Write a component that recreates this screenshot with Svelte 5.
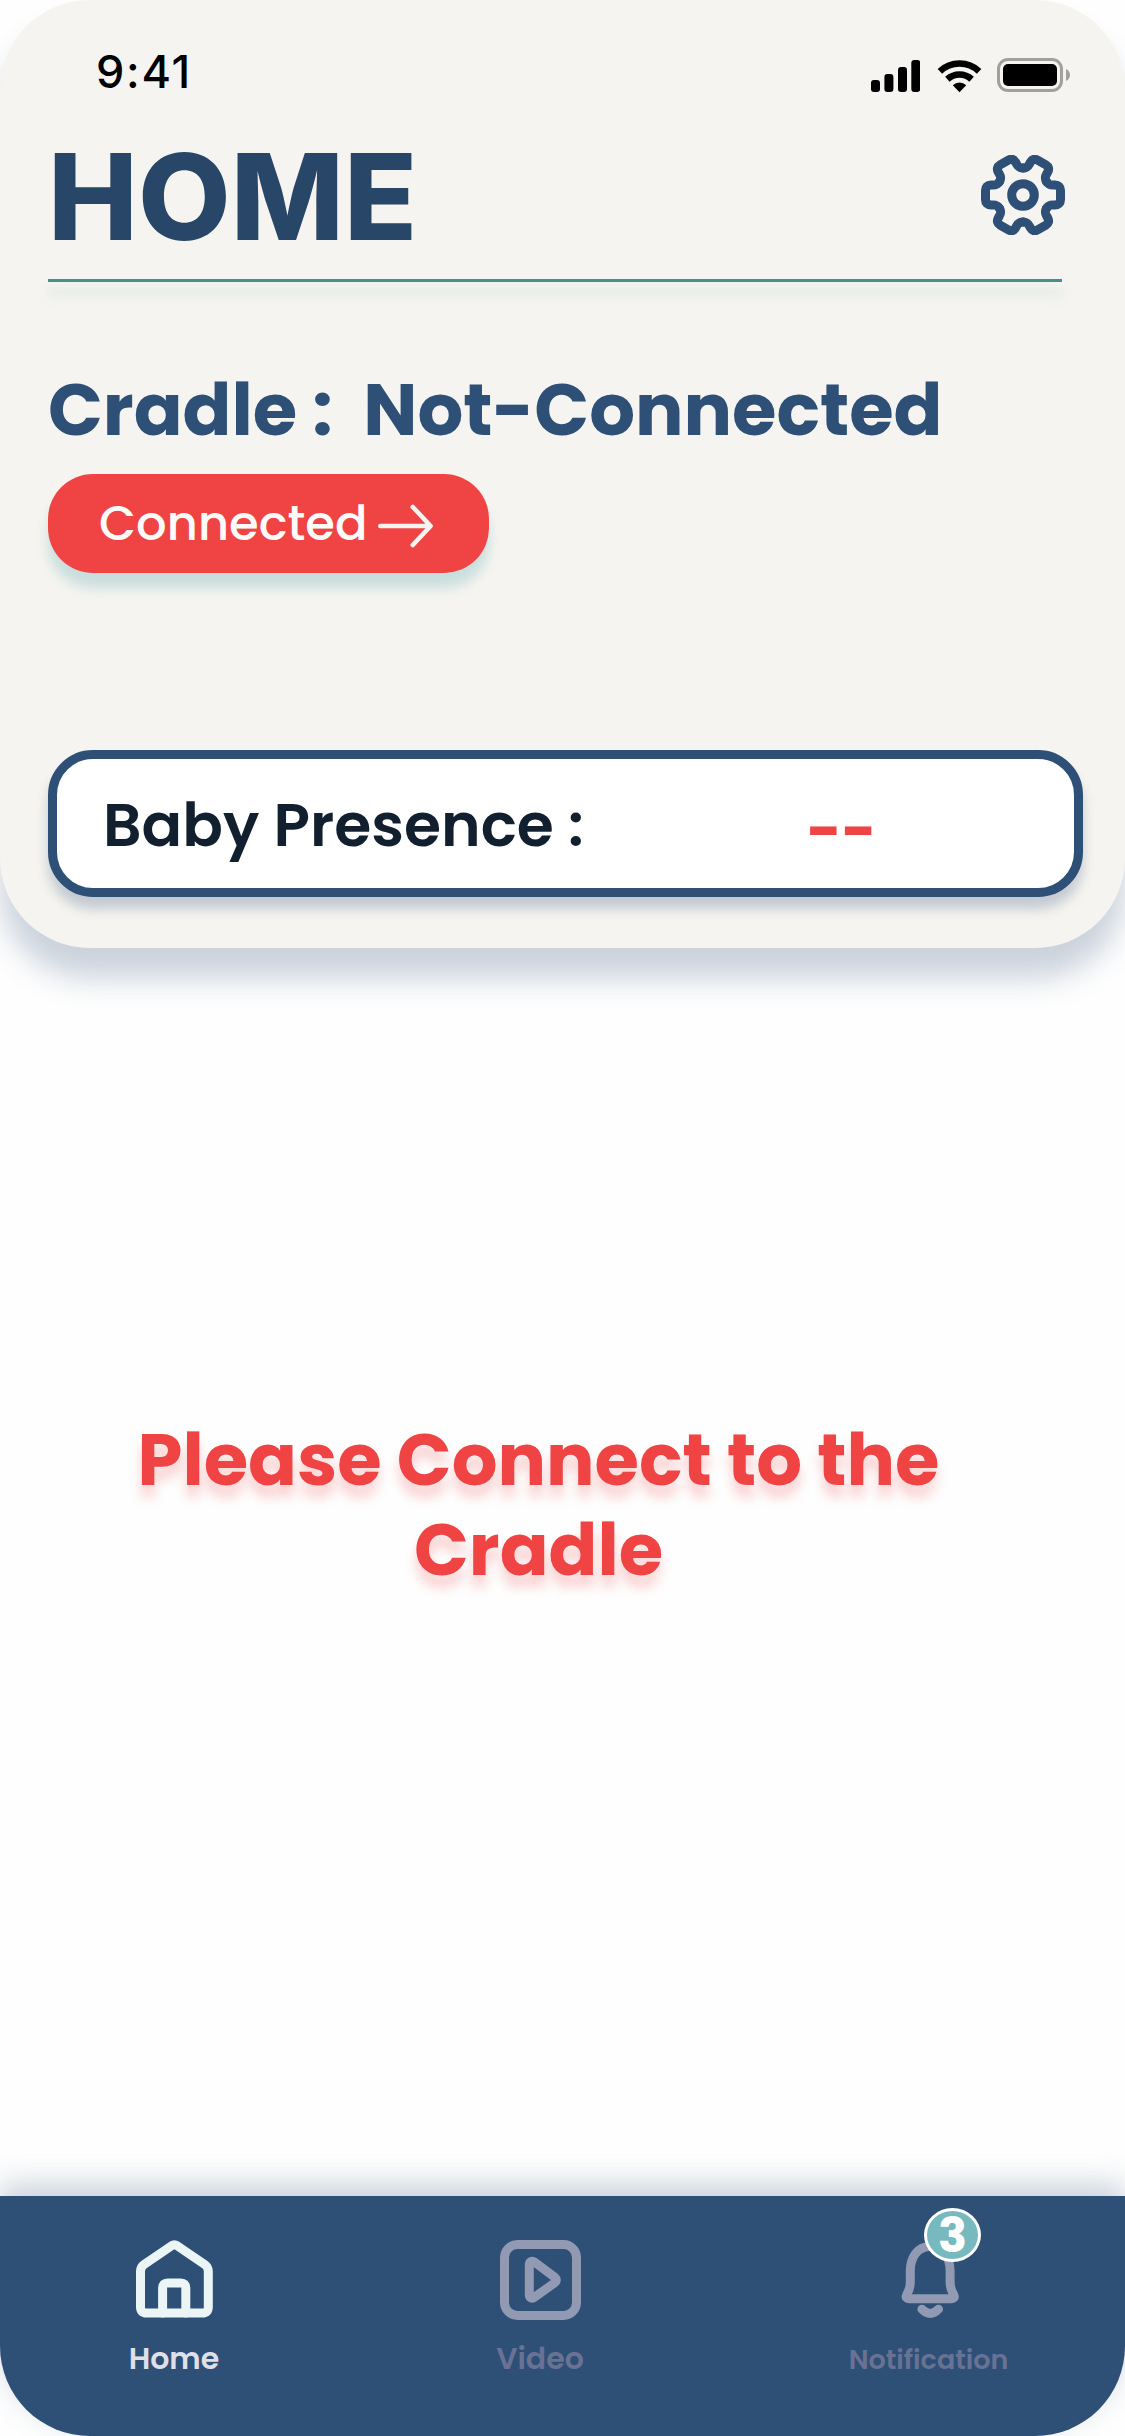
<script>
  let unread = $state(3);
  let active = $state('Home');

  // One gear tooth, pointing right; six rotated copies form the outline.
  const tooth = 'M23.4 -13.5C25.9 -9.2 28.5 -10 32 -10C35.6 -10 37.5 -8 37.5 -4.8V4.8C37.5 8 35.6 10 32 10C28.5 10 25.9 9.2 23.4 13.5';
  const angles = [0, 60, 120, 180, 240, 300];
</script>

<div class="screen">
  <section class="panel">
    <div class="status">
      <span class="time">9:41</span>
      <div class="indicators">
        <svg class="signal" viewBox="0 0 49 32" width="49" height="32">
          <rect x="0" y="20" width="9" height="12" rx="3" />
          <rect x="13.4" y="14" width="9" height="18" rx="3" />
          <rect x="27" y="7" width="9" height="25" rx="3" />
          <rect x="40.3" y="0" width="9" height="32" rx="3" />
        </svg>
        <svg class="wifi" viewBox="0 0 45 34" width="45" height="34">
          <path d="M2.9 12.3A28.6 28.6 0 0 1 42.1 12.3" fill="none" stroke="#000" stroke-width="6.6" />
          <path d="M10.4 20.2A18 18 0 0 1 34.6 20.2" fill="none" stroke="#000" stroke-width="6.6" />
          <path d="M15.8 26.2A10 10 0 0 1 29.2 26.2L22.5 33.2Z" />
        </svg>
        <svg class="battery" viewBox="0 0 74 34" width="74" height="34">
          <rect x="1.5" y="1.5" width="63" height="31" rx="9.5" fill="none" stroke="#a1a09d" stroke-width="3" />
          <rect x="6" y="6" width="54" height="22" rx="5" />
          <path d="M69 11C71.6 12.2 73 14.4 73 17S71.6 21.8 69 23Z" fill="#a1a09d" />
        </svg>
      </div>
    </div>

    <header>
      <h1>HOME</h1>
      <svg class="gear" viewBox="-42 -40 84 80" width="84" height="80">
        {#each angles as a}
          <path d={tooth} transform="rotate({a})" />
        {/each}
        <circle r="11.3" />
      </svg>
    </header>
    <div class="divider"></div>

    <h2>Cradle :&nbsp; Not-Connected</h2>
    <button class="connect">
      <span>Connected</span>
      <svg viewBox="0 0 56 44" width="56" height="44">
        <path d="M2.3 22H52M34.8 3L52.6 22L34.8 41" />
      </svg>
    </button>

    <div class="presence">
      <span class="label">Baby Presence :</span>
      <span class="value">--</span>
    </div>
  </section>

  <main>
    <p>Please Connect to the<br />Cradle</p>
  </main>

  <nav>
    <a class="item" class:active={active === 'Home'}>
      <svg viewBox="0 0 77 80" width="77" height="80">
        <path d="M4.5 31.2Q4.5 27 7.9 24.6L35.8 5.6Q38.4 4 41 5.6L68.9 24.6Q72.3 27 72.3 31.2V67Q72.3 73 66.3 73H10.5Q4.5 73 4.5 67Z" />
        <path d="M26.6 73V48Q26.6 43 31.6 43H44.8Q49.8 43 49.8 48V73" />
      </svg>
      <span class="caption">Home</span>
    </a>
    <a class="item" class:active={active === 'Video'}>
      <svg viewBox="0 0 81 80" width="81" height="80">
        <rect x="4.5" y="4.5" width="72" height="71" rx="13" />
        <path d="M29.3 25C29.3 21.3 32 20.3 34.6 22.2L54.6 37.2C56.8 38.9 56.8 41.1 54.6 42.8L34.6 57.2C32 59.2 29.3 58.2 29.3 54.5Z" />
      </svg>
      <span class="caption">Video</span>
    </a>
    <a class="item alerts" class:active={active === 'Notification'}>
      <svg viewBox="0 0 58 80" width="58" height="80">
        <path d="M29.2 6.5C16 6.5 9.3 18 9.3 31V42C9.3 49 7 52 5.6 55C4.3 57.5 5.8 58.7 8 58.7H50.4C52.6 58.7 54.1 57.5 52.8 55C51.4 52 49.1 49 49.1 42V31C49.1 18 42.4 6.5 29.2 6.5Z" />
        <path d="M20.9 69.2Q29.2 77.6 37.5 69.2" />
      </svg>
      <span class="badge">{unread}</span>
      <span class="caption">Notification</span>
    </a>
  </nav>
</div>

<style>
  :global(body) {
    background: #fff;
  }

  .screen {
    display: flex;
    flex-direction: column;
    width: 1125px;
    height: 2436px;
    overflow: hidden;
    background: #fefefe;
    font-family: Poppins, Inter, sans-serif;
  }

  .panel {
    box-sizing: border-box;
    flex: none;
    height: 948px;
    padding: 41px 0 0 48px;
    border-radius: 90px;
    background: #f5f4f0;
    box-shadow: 0 30px 30px rgba(46, 80, 118, 0.25);
  }

  .status {
    display: flex;
    justify-content: space-between;
    height: 60px;
    padding: 0 54px 0 48px;
  }

  .time {
    font-family: Inter, sans-serif;
    font-size: 45px;
    font-weight: 540;
    line-height: 61px;
    letter-spacing: 1.7px;
  }

  .indicators {
    display: flex;
    align-items: flex-start;
    padding-top: 17px;
  }

  .signal {
    margin-top: 2px;
  }

  .wifi {
    margin: 1px 15px 0 17px;
  }

  header {
    display: flex;
    justify-content: space-between;
    align-items: flex-start;
    margin-top: 35px;
    padding-right: 60px;
  }

  h1 {
    margin: 0;
    font-family: Inter, sans-serif;
    font-size: 120px;
    font-weight: 780;
    line-height: 122px;
    letter-spacing: 0.1px;
    color: #284667;
  }

  .gear {
    margin-top: 18.5px;
    fill: none;
    stroke: #2e5077;
    stroke-width: 9;
    stroke-linecap: round;
  }

  .divider {
    width: 1014px;
    height: 3px;
    margin-top: 21px;
    background: #468f91;
    box-shadow: 0 12px 12px rgba(77, 161, 169, 0.25);
  }

  h2 {
    margin: 83px 0 0;
    font-size: 72px;
    font-weight: 700;
    line-height: 90px;
    white-space: nowrap;
    color: #2e5077;
  }

  .connect {
    display: flex;
    align-items: center;
    box-sizing: border-box;
    width: 441px;
    height: 99px;
    margin-top: 19px;
    padding: 0 0 0 51px;
    border: 0;
    border-radius: 45px;
    background: #f04444;
    box-shadow: 0 15px 12px rgba(77, 161, 169, 0.25);
    font: 500 48px/60px Poppins, Inter, sans-serif;
    color: #fdfcfb;
  }

  .connect svg {
    margin: 4px 0 0 11px;
    fill: none;
    stroke: #f5f4f0;
    stroke-width: 4.6;
    stroke-linecap: round;
    stroke-linejoin: round;
  }

  .presence {
    display: flex;
    align-items: center;
    box-sizing: border-box;
    width: 1035px;
    height: 147px;
    margin-top: 177px;
    padding-left: 46px;
    border: 9px solid #2e5077;
    border-radius: 45px;
    background: #fff;
    box-shadow: 0 12px 12px rgba(46, 80, 118, 0.25);
  }

  .presence .label {
    width: 704px;
    padding-top: 3px;
    font-size: 60px;
    font-weight: 600;
    line-height: 80px;
    color: #111f2f;
  }

  .presence .value {
    padding-top: 15px;
    font-size: 60px;
    font-weight: 700;
    line-height: 80px;
    color: #f04444;
  }

  main {
    flex: 1;
    padding: 467px 48px 0 0;
  }

  main p {
    margin: 0;
    font-size: 72px;
    font-weight: 700;
    line-height: 90px;
    text-align: center;
    color: #f04444;
    text-shadow: 0 12px 12px rgba(240, 68, 68, 0.25);
  }

  nav {
    display: grid;
    flex: none;
    grid-template-columns: 348px 384px 393px;
    height: 240px;
    border-radius: 0 0 90px 90px;
    background: #2e5077;
    box-shadow: 0 -12px 30px rgba(46, 80, 118, 0.25);
  }

  .item {
    position: relative;
    display: flex;
    flex-direction: column;
    align-items: center;
    padding-top: 44px;
    color: #6a7293;
  }

  .item svg {
    fill: none;
    stroke: #9199b3;
    stroke-width: 9;
    stroke-linecap: round;
    stroke-linejoin: round;
  }

  .item.active {
    color: #dfdfe7;
  }

  .item.active svg {
    stroke: #ebf5f6;
  }

  .caption {
    margin-top: 19px;
    font-size: 30px;
    font-weight: 600;
    line-height: 40px;
  }

  .alerts {
    padding-left: 3px;
  }

  .alerts .caption {
    margin: 20px 3px 0 0;
    font-size: 27px;
  }

  .badge {
    position: absolute;
    top: 12px;
    left: 192px;
    box-sizing: border-box;
    width: 57px;
    height: 54px;
    border: 3px solid #fff;
    border-radius: 50%;
    background: #77b9be;
    font-size: 48px;
    font-weight: 700;
    line-height: 49px;
    text-align: center;
    color: #fff;
  }
</style>
